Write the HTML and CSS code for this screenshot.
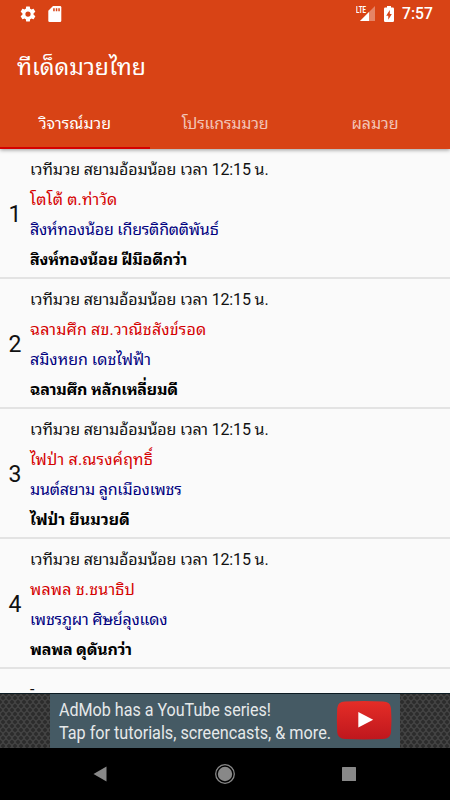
FILE: index.html
```html
<!DOCTYPE html>
<html lang="th">
<head>
<meta charset="utf-8">
<title>ทีเด็ดมวยไทย</title>
<link rel="stylesheet" href="styles.css">
</head>
<body>
<div class="screen">
  <header class="appbar">
    <div class="status">
      <svg class="gear" width="18" height="18" viewBox="0 0 24 24"><path fill="#fff" d="M19.4 13c0-.3.1-.6.1-1s0-.7-.1-1l2.100-1.650c.2-.15.250-.420.120-.640l-2-3.460c-.120-.220-.390-.300-.610-.220l-2.490 1c-.520-.400-1.080-.730-1.690-.980l-.380-2.650A.49.49 0 0 0 14 2h-4c-.250 0-.460.180-.490.420l-.380 2.650c-.610.250-1.170.590-1.690.980l-2.490-1c-.230-.090-.490 0-.610.220l-2 3.460c-.130.220-.070.490.120.640L4.570 11c-.040.300-.070.650-.070 1s.030.700.070 1l-2.110 1.650c-.190.150-.240.420-.120.640l2 3.460c.120.220.390.300.610.220l2.490-1c.520.400 1.080.730 1.690.980l.380 2.650c.030.240.240.400.490.400h4c.250 0 .460-.180.490-.420l.380-2.650c.610-.250 1.170-.590 1.690-.980l2.490 1c.230.090.490 0 .610-.220l2-3.460c.120-.220.070-.490-.120-.640zM12 15.500a3.500 3.500 0 1 1 0-7 3.500 3.500 0 0 1 0 7z"/></svg>
      <svg class="sd" width="14" height="16" viewBox="0 0 14 16"><path fill="#fff" d="M5 0h7q1.300 0 1.300 1.300v13.400q0 1.300-1.300 1.300H1.600Q.3 16 .3 14.700V4.800z"/><path fill="#d84315" d="M5.200 2.200h1.500v3H5.200zM7.800 2.200h1.500v3H7.800zM10.300 2.200h1.500v3h-1.500z"/></svg>
      <span class="spacer"></span>
      <svg class="signal" width="20" height="17" viewBox="0 0 20 17"><path fill="#fff" fill-opacity=".35" d="M19 1v15H4z"/><path fill="#fff" d="M13 7v9H4z"/><text class="lte" x="0" y="8" textLength="10" lengthAdjust="spacingAndGlyphs">LTE</text></svg>
      <svg class="battery" width="10" height="16" viewBox="0 0 10 16"><path fill="#fff" d="M3 0h4v1.600h1.800q1.200 0 1.200 1.200v12q0 1.200-1.200 1.200H1.200Q0 16 0 14.800v-12q0-1.200 1.200-1.200H3z"/><path fill="#d84315" d="M5.800 4L2.200 9.700h2.100v4l3.500-5.800H5.800z"/></svg>
      <span class="clock">7:57</span>
    </div>
    <h1 class="title"><span>ทีเด็ดมวยไทย</span></h1>
    <nav class="tabs">
      <div class="tab active"><span>วิจารณ์มวย</span></div>
      <div class="tab middle"><span>โปรแกรมมวย</span></div>
      <div class="tab"><span>ผลมวย</span></div>
    </nav>
  </header>
  <main class="list">
    <section class="row"><div class="num">1</div><div class="lines">
      <p>เวทีมวย สยามอ้อมน้อย เวลา 12:15 น.</p><p class="red">โตโต้ ต.ท่าวัด</p><p class="blue">สิงห์ทองน้อย เกียรติกิตติพันธ์</p><p class="pick">สิงห์ทองน้อย ฝีมือดีกว่า</p></div></section>
    <section class="row"><div class="num">2</div><div class="lines">
      <p>เวทีมวย สยามอ้อมน้อย เวลา 12:15 น.</p><p class="red">ฉลามศึก สข.วาณิชสังข์รอด</p><p class="blue normal">สมิงหยก เดชไฟฟ้า</p><p class="pick">ฉลามศึก หลักเหลี่ยมดี</p></div></section>
    <section class="row"><div class="num">3</div><div class="lines">
      <p>เวทีมวย สยามอ้อมน้อย เวลา 12:15 น.</p><p class="red">ไฟป่า ส.ณรงค์ฤทธิ์</p><p class="blue">มนต์สยาม ลูกเมืองเพชร</p><p class="pick normal">ไฟป่า ยืนมวยดี</p></div></section>
    <section class="row"><div class="num">4</div><div class="lines">
      <p>เวทีมวย สยามอ้อมน้อย เวลา 12:15 น.</p><p class="red">พลพล ช.ชนาธิป</p><p class="blue">เพชรภูผา ศิษย์ลุงแดง</p><p class="pick">พลพล ดุดันกว่า</p></div></section>
    <section class="row"><div class="num"></div><div class="lines"><p>-</p></div></section>
  </main>
  <aside class="ad">
    <div class="banner">
      <svg width="350" height="54" viewBox="0 0 350 54">
        <defs><linearGradient id="play" x2="0" y2="1"><stop stop-color="#e52d27"/><stop offset="1" stop-color="#bf171d"/></linearGradient></defs>
        <text class="adtext" x="9" y="22" textLength="212" lengthAdjust="spacingAndGlyphs">AdMob has a YouTube series!</text>
        <text class="adtext" x="9" y="45" textLength="272" lengthAdjust="spacingAndGlyphs">Tap for tutorials, screencasts, &amp; more.</text>
        <path fill="url(#play)" d="M295 7.600Q314 6.600 333 7.600Q340.500 7.800 341 14.300Q342 26.300 341 38.300Q340.500 44.800 333 45Q314 45.800 295 45Q287.700 44.800 287.200 38.300Q286.500 26.300 287.200 14.300Q287.700 7.800 295 7.600z"/>
        <path fill="#fff" d="M308.300 18v15.600L323.200 25.800z"/>
      </svg>
    </div>
  </aside>
  <footer class="nav">
    <svg width="14" height="16" viewBox="0 0 14 16"><path fill="#888" d="M13.500 .5v15L.5 8z"/></svg>
    <svg width="20" height="20" viewBox="0 0 20 20"><circle cx="10" cy="10" r="9.300" fill="none" stroke="#888" stroke-width="1.300"/><circle cx="10" cy="10" r="7.200" fill="#888"/></svg>
    <svg width="14" height="14" viewBox="0 0 14 14"><rect width="14" height="14" rx=".5" fill="#888"/></svg>
  </footer>
</div>
</body>
</html>
```
FILE: styles.css
```css
* { box-sizing: border-box; }
body { margin: 0; font-family: Roboto, "Noto Sans Thai Looped", "Droid Sans Thai", Loma, Waree, Garuda, "Noto Sans Thai", "Noto Sans", sans-serif; }
.screen { width: 450px; height: 800px; display: flex; flex-direction: column; overflow: hidden; background: #fafafa; }
.appbar { flex: none; height: 149px; background: #d84315; color: #fff; display: flex; flex-direction: column; box-shadow: 0 1px 4px rgba(0,0,0,.4); z-index: 1; }
.status { height: 27px; display: flex; align-items: center; padding: 0 17px 0 19px; }
.sd { margin-left: 11px; }
.spacer { flex: 1; }
.battery { margin-left: 8px; }
.lte { font-size: 9px; font-weight: 700; fill: #fff; }
.clock { margin-left: 8px; font-size: 15.700px; line-height: 27px; font-weight: 500; width: 31px; white-space: nowrap; }
.title { margin: 0; height: 79px; padding-left: 17px; font-size: 23px; font-weight: 400; line-height: 81px; }
.tabs { display: flex; height: 43px; }
.tab { flex: 1; text-align: center; font-size: 16px; line-height: 35px; color: rgba(255,255,255,.7); border-bottom: 2px solid transparent; }
.tab.active { color: #fff; border-bottom-color: #d50000; }
.tab.middle { letter-spacing: -.2px; }
.list { flex: none; height: 544px; overflow: hidden; }
.row { height: 130px; display: flex; padding-top: 6px; border-bottom: 2px solid #e3e3e3; }
.num { width: 30px; text-align: center; font-size: 23px; line-height: 120px; color: #111; }
.lines { flex: 1; }
.lines p { margin: 0; height: 30px; line-height: 30px; font-size: 16px; letter-spacing: -.15px; color: #111; white-space: nowrap; }
.lines .red { color: #d50000; letter-spacing: .18px; }
.lines .blue { color: #000080; letter-spacing: -.2px; }
.lines .pick { font-weight: 700; color: #000; letter-spacing: -.23px; }
.lines .normal { letter-spacing: 0; }
.ad { flex: none; height: 55px; display: flex; justify-content: center; border-top: 1px solid #0b1a22; background-color: #424242; background-image: radial-gradient(circle, #2c2c2c 1.500px, transparent 2.200px), radial-gradient(circle, #2c2c2c 1.500px, transparent 2.200px); background-size: 6px 8px; background-position: 0 0, 3px 4px; }
.banner { width: 350px; height: 54px; background: #455a64; }
.banner svg { display: block; }
.adtext { font-size: 19px; fill: #e6e9ea; }
.nav { flex: none; height: 52px; background: #000; display: flex; justify-content: space-between; align-items: center; padding: 0 94px 0 93px; }
```
